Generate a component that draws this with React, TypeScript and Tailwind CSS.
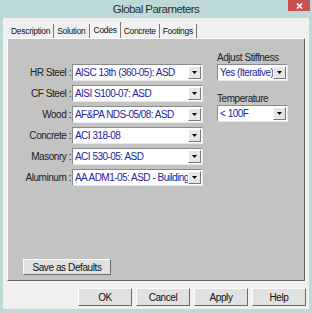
import React from "react";

const font = { fontFamily: '"Liberation Sans", Arial, sans-serif' };

const codeRows = [
    { label: "HR Steel :", value: "AISC 13th (360-05): ASD" },
    { label: "CF Steel :", value: "AISI S100-07: ASD" },
    { label: "Wood :", value: "AF&PA NDS-05/08: ASD" },
    { label: "Concrete :", value: "ACI 318-08" },
    { label: "Masonry :", value: "ACI 530-05: ASD" },
    { label: "Aluminum :", value: "AA ADM1-05: ASD - Building" },
];

const tabs = ["Description", "Solution", "Codes", "Concrete", "Footings"];

function Combo({ value, width }: { value: string; width: string }) {
    return (
        <div
            className={`${width} h-[17px] flex items-center bg-white border border-t-[#8a8a8a] border-l-[#8a8a8a] border-r-[#e8e8e8] border-b-[#e8e8e8]`}
        >
            <span className="flex-1 pl-[2px] text-[10px] tracking-[-0.55px] [word-spacing:0.2px] leading-none text-[#2424a0] whitespace-nowrap overflow-hidden">
                {value}
            </span>
            <div className="shrink-0 w-[13px] h-[13px] mr-[1px] flex items-center justify-center bg-[#e6e6e6] border border-t-white border-l-white border-r-[#777] border-b-[#777]">
                <svg width="5" height="3" viewBox="0 0 5 3">
                    <path d="M0 0h5L2.5 3z" fill="#000" />
                </svg>
            </div>
        </div>
    );
}

function Button({ children, className = "" }: { children: React.ReactNode; className?: string }) {
    return (
        <div
            className={`flex items-center justify-center bg-[#e1e1e1] border border-t-[#fdfdfd] border-l-[#fdfdfd] border-r-[#6a6a6a] border-b-[#6a6a6a] text-[10px] tracking-[-0.4px] text-[#111] ${className}`}
        >
            {children}
        </div>
    );
}

export default function App() {
    return (
        <div className="w-[312px] h-[313px] bg-[#bedad8] flex flex-col" style={font}>
            {/* Title bar */}
            <div className="h-[18px] relative flex items-center justify-center">
                <span className="text-[11.5px] tracking-[-0.55px] text-[#2b2b2b] pt-[1px]">Global Parameters</span>
                <div className="absolute right-[2px] top-0 w-[22px] h-[11px] bg-[#c75050] flex items-center justify-center">
                    <svg width="7" height="6" viewBox="0 0 7 6">
                        <path d="M1 0.5l5 5M6 0.5l-5 5" stroke="#fff" strokeWidth="1.6" />
                    </svg>
                </div>
            </div>

            {/* Client area */}
            <div className="flex-1 mx-[3px] mb-[4px] bg-[#f0f0f0] flex flex-col">
                {/* Tabs */}
                <div className="flex items-end h-[20px] pl-[5px] pr-[4px]">
                    {tabs.map((t) => (
                        <div
                            key={t}
                            className={`px-[3px] text-[8.5px] tracking-[-0.3px] leading-[13px] text-[#111] border-r border-r-[#777] ${
                                t === "Codes" ? "h-[16px] pt-[2px] bg-[#f3f3f3] border-l border-l-white" : "h-[14px] pt-[1px]"
                            }`}
                        >
                            {t}
                        </div>
                    ))}
                </div>

                {/* Tab panel */}
                <div className="h-[243px] ml-[4px] mr-[4px] bg-[#c3c3c3] border border-t-white border-l-white border-r-[#5f5f5f] border-b-[#5f5f5f] flex flex-col">
                    <div className="flex pt-[25px]">
                        <div className="flex flex-col gap-[4px]">
                            {codeRows.map((r) => (
                                <div key={r.label} className="flex items-center">
                                    <span className="w-[64px] pr-[1px] text-right text-[10px] tracking-[-0.45px] text-[#222] whitespace-nowrap">
                                        {r.label}
                                    </span>
                                    <Combo value={r.value} width="w-[131px]" />
                                </div>
                            ))}
                        </div>
                        <div className="ml-[14px] flex flex-col -mt-[13px]">
                            <span className="text-[10px] tracking-[-0.45px] text-[#222] leading-[13px]">Adjust Stiffness</span>
                            <Combo value="Yes (Iterative)" width="w-[71px]" />
                            <span className="mt-[11px] text-[10px] tracking-[-0.45px] text-[#222] leading-[13px]">Temperature</span>
                            <Combo value="< 100F" width="w-[71px]" />
                        </div>
                    </div>
                    <div className="flex-1" />
                    <Button className="w-[88px] h-[16px] ml-[15px] mb-[5px]">Save as Defaults</Button>
                </div>

                {/* Dialog buttons */}
                <div className="flex justify-end gap-[4px] pr-[3px] mt-[7px]">
                    <Button className="w-[54px] h-[18px]">OK</Button>
                    <Button className="w-[54px] h-[18px]">Cancel</Button>
                    <Button className="w-[54px] h-[18px]">Apply</Button>
                    <Button className="w-[54px] h-[18px]">Help</Button>
                </div>
            </div>
        </div>
    );
}
